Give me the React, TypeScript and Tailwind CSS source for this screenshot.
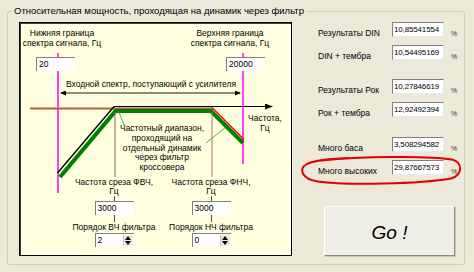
import React from "react";

const F = { fontFamily: '"Liberation Sans", Arial, sans-serif' };

function Field({ value }: { value: string }) {
  return (
    <div className="w-[52px] h-[15px] bg-white border-t border-l border-t-[#7f7f7f] border-l-[#7f7f7f] border-b border-r border-b-[#e8e8e8] border-r-[#e8e8e8] text-[8px] tracking-[-0.15px] leading-[11px] pl-[1px] pt-[1px] text-black overflow-hidden whitespace-nowrap">
      {value}
    </div>
  );
}

function Row({ label, value, extra }: { label: string; value: string; extra: string }) {
  return (
    <div className={"flex items-start h-[15px] " + extra}>
      <div className="w-[74px] mt-[5px] text-[8.5px] leading-[12px] text-black whitespace-nowrap">{label}</div>
      <Field value={value} />
      <div className="ml-[7px] mt-[6px] text-[7px] leading-[12px] text-[#333]">%</div>
    </div>
  );
}

function Box({ value, spin }: { value: string; spin?: boolean }) {
  return (
    <div className="relative w-[39px] h-[14px] bg-white border-t border-l border-[#7f7f7f] text-[8.5px] leading-[11px] pl-[2px] pt-[1px] text-black">
      {value}
      {spin && (
        <div className="absolute right-[1px] top-[1px] w-[10px] h-[11px] bg-[#ece9d8] flex flex-col items-center justify-center gap-[1px] border-l border-[#c8c8c0]">
          <svg width="6" height="4" viewBox="0 0 6 4"><path d="M0 4 L3 0 L6 4 Z" fill="#000" /></svg>
          <svg width="6" height="4" viewBox="0 0 6 4"><path d="M0 0 L3 4 L6 0 Z" fill="#000" /></svg>
        </div>
      )}
    </div>
  );
}

function CutColumn({ kind, cutoff, order }: { kind: string; cutoff: string; order: string }) {
  return (
    <div className="flex flex-col items-center w-[100px]">
      <div className="text-center text-[8.5px] leading-[9px] text-black whitespace-nowrap">
        Частота среза {kind},<br />Гц
      </div>
      <div className="w-px h-[5px] bg-[#555] ml-[1px]" />
      <Box value={cutoff} />
      <div className="w-px h-[7px] bg-[#555] ml-[1px]" />
      <div className="text-center text-[8.5px] leading-[10px] text-black whitespace-nowrap">
        Порядок {kind === "ФВЧ" ? "ВЧ" : "НЧ"} фильтра
      </div>
      <div className="mt-[1px]">
        <Box value={order} spin />
      </div>
    </div>
  );
}

export default function App() {
  return (
    <div className="w-[474px] h-[272px] bg-[#ece9d8] relative overflow-hidden pt-[11px] pl-[7px]" style={F}>
      <div className="relative w-[458px] h-[254px] border border-[#cfcdbf] rounded-[3px]">
        <div className="absolute left-[4px] top-[-7px] px-[2px] bg-[#ece9d8] text-[9.5px] leading-[12px] text-black whitespace-nowrap">
          Относительная мощность, проходящая на динамик через фильтр
        </div>
        <div className="flex pt-[10px] pl-[11px]">
          {/* Chart */}
          <div className="relative w-[273px] h-[234px] bg-[#ffffe0] border border-black shadow-[inset_1px_1px_0_#404040]">
            <svg className="absolute left-0 top-0" width="271" height="232" viewBox="20 23 271 232">
              <defs>
                <marker id="ah" markerWidth="8" markerHeight="6" refX="7" refY="3" orient="auto" markerUnits="userSpaceOnUse">
                  <path d="M0 0 L8 3 L0 6 Z" fill="#000" />
                </marker>
                <marker id="ahs" markerWidth="6" markerHeight="5" refX="5" refY="2.5" orient="auto-start-reverse" markerUnits="userSpaceOnUse">
                  <path d="M0 0 L6 2.5 L0 5 Z" fill="#000" />
                </marker>
              </defs>
              <line x1="58" y1="53" x2="58" y2="193" stroke="#ff00ff" strokeWidth="1.5" />
              <line x1="243" y1="53" x2="243" y2="164" stroke="#ff00ff" strokeWidth="1.5" />
              <line x1="61" y1="93" x2="240" y2="93" stroke="#000" strokeWidth="0.9" markerStart="url(#ahs)" markerEnd="url(#ahs)" />
              <line x1="30" y1="108.5" x2="213" y2="108.5" stroke="#c25b3c" strokeWidth="2.2" />
              <polyline points="60,177 115.5,111 211,111 243,143" fill="none" stroke="#008000" strokeWidth="4.2" strokeLinejoin="miter" />
              <polyline points="57.5,173 114,106.5" fill="none" stroke="#000" strokeWidth="1.4" />
              <line x1="114" y1="106.5" x2="272" y2="106.5" stroke="#000" strokeWidth="1.2" markerEnd="url(#ah)" />
              <line x1="212" y1="107.5" x2="244" y2="139.5" stroke="#ff0000" strokeWidth="1.4" />
              <line x1="115" y1="112" x2="115" y2="177" stroke="#8a6a5a" strokeWidth="1" />
              <line x1="212" y1="112" x2="212" y2="177" stroke="#b07866" strokeWidth="1" />
              <line x1="118.5" y1="111" x2="124.5" y2="126" stroke="#3a8a3a" strokeWidth="0.8" />
              <line x1="206" y1="143" x2="226" y2="127" stroke="#3a8a3a" strokeWidth="0.8" />
            </svg>

            {/* lower / upper spectrum limits */}
            <div className="absolute left-[2px] top-[5px] w-[80px] flex flex-col">
              <div className="text-center text-[8.5px] leading-[10px] text-black whitespace-nowrap">
                Нижняя граница<br />спектра сигнала, Гц
              </div>
              <div className="mt-[9px] ml-[14px]">
                <Box value="20" />
              </div>
            </div>
            <div className="absolute left-[170px] top-[5px] w-[80px] flex flex-col">
              <div className="text-center text-[8.5px] leading-[10px] text-black whitespace-nowrap">
                Верхняя граница<br />спектра сигнала, Гц
              </div>
              <div className="mt-[9px] ml-[36px]">
                <Box value="20000" />
              </div>
            </div>

            <div className="absolute left-[41px] top-[56px] w-[180px] text-center text-[8.5px] leading-[10px] text-black whitespace-nowrap">
              Входной спектр, поступающий с усилителя
            </div>
            <div className="absolute left-[225px] top-[90px] w-[40px] text-center text-[8.5px] leading-[10px] text-black whitespace-nowrap">
              Частота,<br />Гц
            </div>
            <div className="absolute left-[92px] top-[101px] w-[100px] text-center text-[8.5px] leading-[9.8px] text-black whitespace-nowrap">
              Частотный диапазон,<br />проходящий на<br />отдельный динамик<br />через фильтр<br />кроссовера
            </div>

            {/* cutoff columns */}
            <div className="absolute left-[44px] top-[155px]">
              <CutColumn kind="ФВЧ" cutoff="3000" order="2" />
            </div>
            <div className="absolute left-[141px] top-[155px]">
              <CutColumn kind="ФНЧ" cutoff="3000" order="0" />
            </div>
          </div>

          {/* Right panel */}
          <div className="ml-[26px] flex flex-col">
            <Row label="Результаты DIN" value="10,85541554" extra="" />
            <Row label="DIN + тембра" value="10,54495169" extra="mt-[8px]" />
            <Row label="Результаты Рок" value="10,27846619" extra="mt-[19px]" />
            <Row label="Рок + тембра" value="12,92492394" extra="mt-[8px]" />
            <Row label="Много баса" value="3,508294582" extra="mt-[20px]" />
            <Row label="Много высоких" value="29,87667573" extra="mt-[8px]" />
            <button className="mt-[31px] ml-[6px] w-[131px] h-[50px] bg-[#efeee6] border border-t-[#ffffff] border-l-[#ffffff] border-b-[#8c8b80] border-r-[#8c8b80] shadow-[1px_1px_0_#c8c6b8] flex items-center justify-center">
              <span className="text-[19px] italic text-black leading-none mt-[2px]">Go !</span>
            </button>
          </div>
        </div>
      </div>

      {/* red hand-drawn ellipse */}
      <svg className="absolute left-[298px] top-[152px]" width="168" height="36" viewBox="298 152 168 36">
        <path
          d="M322 160.5 C360 156.5 428 155.5 452 159.5 C463 162 463 175 451 178.5 C420 184 345 185.5 318 181.5 C302 179 298 169 307 164 C316 159.5 332 159 348 158"
          fill="none"
          stroke="#e00000"
          strokeWidth="2"
          strokeLinecap="round"
        />
      </svg>
    </div>
  );
}
